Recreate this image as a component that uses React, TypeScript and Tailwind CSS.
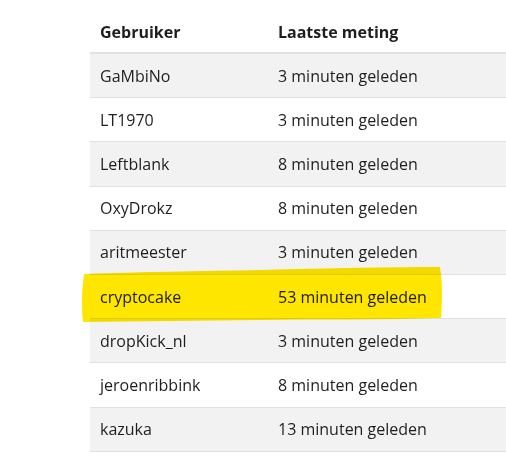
const rows: [string, string][] = [
  ['GaMbiNo', '3 minuten geleden'],
  ['LT1970', '3 minuten geleden'],
  ['Leftblank', '8 minuten geleden'],
  ['OxyDrokz', '8 minuten geleden'],
  ['aritmeester', '3 minuten geleden'],
  ['cryptocake', '53 minuten geleden'],
  ['dropKick_nl', '3 minuten geleden'],
  ['jeroenribbink', '8 minuten geleden'],
  ['kazuka', '13 minuten geleden'],
];

export default function App() {
  return (
    <div className="relative w-[506px] h-[469px] bg-white overflow-hidden text-[#1e1e1e] text-[16px] font-['Open_Sans',sans-serif]">
      <div className="ml-[90px] pt-[11px]">
        {/* header */}
        <div className="grid grid-cols-[188px_1fr] h-[43px] items-center font-bold border-b-2 border-[#dee2e6]">
          <div className="pl-[10px]">Gebruiker</div>
          <div>Laatste meting</div>
        </div>
        {rows.map(([user, time], i) => (
          <div
            key={user}
            className={
              'grid grid-cols-[188px_1fr] h-[44.2px] items-center border-b border-[#dee2e6] ' +
              (i % 2 === 0 ? 'bg-[#f2f2f2]' : 'bg-white')
            }
          >
            <div className="pl-[10px]">{user}</div>
            <div>{time}</div>
          </div>
        ))}
      </div>

      {/* highlighter marker over the cryptocake row */}
      <svg
        className="absolute left-0 top-0 pointer-events-none mix-blend-multiply"
        width="506"
        height="469"
        viewBox="0 0 506 469"
      >
        <path
          d="M84 274 C140 272 200 271 260 270 C330 268 390 267 440 267 C443 285 442 303 441 318 C380 320 320 319 260 320 C200 321 140 321 83 322 C81 306 82 290 84 274 Z"
          fill="#ffe600"
        />
      </svg>
    </div>
  );
}
